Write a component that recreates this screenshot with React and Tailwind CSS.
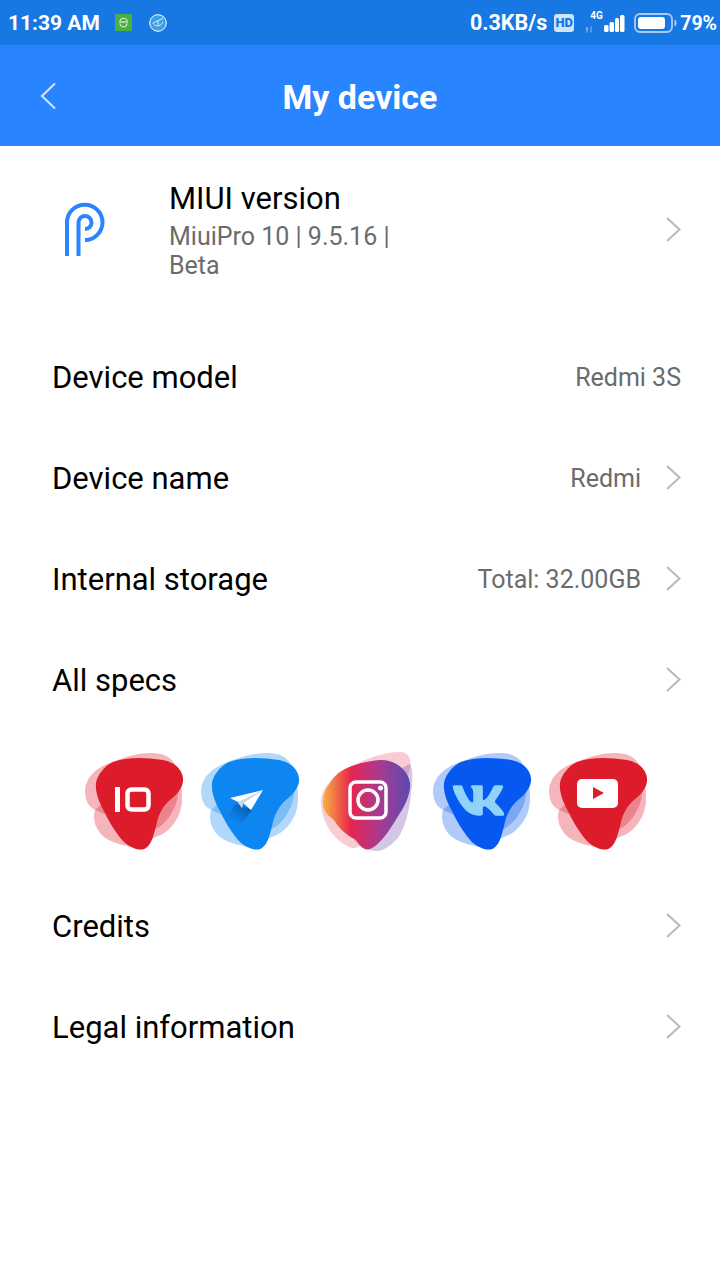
import React from "react";
import { FaVk } from "react-icons/fa";

const Chevron = ({ className = "" }) => (
  <svg width="15" height="25" viewBox="0 0 15 25" fill="none" className={className}>
    <path d="M1 1L13.500 12.500L1 24" stroke="#b8b8b8" strokeWidth="2" />
  </svg>
);

const MAIN = "M12 31C13 24 20 14 29 10C42 5 60 5 79 8C90 10 98 17 99 26C100 34 94 42 86 48C79 54 75 62 73 70C70 82 68 92 62 96C58 99 50 98 41 91C34 84 26 72 21 61C16 52 11 42 12 31Z";
const BACK_A = "M1 38C2 24 14 15 28 10C44 4 54 1 68 1C80 1 90 6 92 16C96 30 96 48 88 60C84 68 78 74 70 78C50 70 20 64 8 56C3 52 1 46 1 38Z";
const BACK_B = "M11 58C8 68 12 78 20 85C30 92 42 94 56 96C66 90 68 86 72 85C82 82 92 72 96 60C100 48 98 30 92 14C70 30 30 40 11 58Z";

const IG_MAIN = "M3 51C3 42 6 36 10 31C14 24 20 19 27 16C38 11 50 9 60 8C72 7 88 16 90 31C91 40 86 52 80 61C72 74 62 92 50 97C44 99 40 94 36 88C28 84 19 77 14 68C7 63 3 58 3 51Z";
const IG_BACK_A = "M1 50C1 36 14 22 32 14C46 7 62 0 80 0C88 0 92 6 90 16C80 60 46 98 32 96C16 90 2 74 1 50Z";
const IG_BACK_B = "M34 88C40 50 70 20 90 12C93 16 93 30 91 41C90 58 84 78 78 86C70 94 64 99 57 99C48 99 40 95 34 88Z";

const Blob = ({ main, back, back2, children, defs, paths, className = "" }) => (
  <svg width="100" height="100" viewBox="0 0 100 100" className={className}>
    {defs}
    <path d={paths ? paths[1] : BACK_A} fill={back} opacity="0.32" />
    <path d={paths ? paths[2] : BACK_B} fill={back2 || back} opacity="0.32" />
    <path d={paths ? paths[0] : MAIN} fill={main} />
    {children}
  </svg>
);

const Row = ({ label, value, chevron = true }) => (
  <div className="flex h-[101px] items-center pl-[52px] pr-[39px]">
    <span className="translate-y-[1px] text-[31px] text-black">{label}</span>
    <span className="ml-auto text-[25px] text-[#6b6b6b]">{value}</span>
    {chevron && <Chevron className="ml-[25px] -translate-y-[1px]" />}
  </div>
);

export default function App() {
  return (
    <div className="flex h-[1280px] w-[720px] flex-col bg-white font-['Roboto',sans-serif]">
      <div className="flex h-[45px] items-center bg-[#1777e3] pl-[8px] pr-[3px] pt-[2px] text-white">
        <span className="text-[21px] font-bold">11:39 AM</span>
        <svg width="17" height="17" viewBox="0 0 17 17" className="ml-[15px] -translate-y-[1px]">
          <rect width="17" height="17" fill="#4caf3f" />
          <path d="M5 7C5 3.500 12 3.500 12 7M4 8H13M5 9.500C5 14 12 14 12 9.500" stroke="#fff" strokeWidth="1" fill="none" />
        </svg>
        <svg width="18" height="18" viewBox="0 0 18 18" className="ml-[17px] -translate-y-[1px]">
          <circle cx="9" cy="9" r="8.300" fill="#3aa0e8" stroke="#fff" strokeWidth="1" />
          <path d="M3.500 9.500L9 6.500L14 4.500M5 10.500C8 13 12 12 14 8M9 6.500V11" stroke="#d8f0ff" strokeWidth="1" fill="none" />
        </svg>
        <span className="ml-auto text-[21.500px] font-bold">0.3KB/s</span>
        <span className="ml-[7px] flex h-[18px] w-[20px] -translate-y-[1px] items-center justify-center rounded-[3px] bg-[#cfe3fb] text-[13px] font-black leading-none text-[#1777e3]">HD</span>
        <div className="relative ml-[9px] h-[26px] w-[44px] -translate-y-[2px]">
          <span className="absolute left-[7px] top-[2px] text-[10px] font-bold leading-none">4G</span>
          <svg width="44" height="26" viewBox="0 0 44 26" className="absolute left-0 top-0">
            <path d="M4 23.500V18.500M3 20.500L4 18.500L5 20.500M8 23.500V17.500" stroke="#8fbdf2" strokeWidth="1" fill="none" />
            <rect x="21" y="16" width="4.500" height="7" rx="1.500" fill="#fff" />
            <rect x="26.500" y="13" width="4.500" height="10" rx="1.500" fill="#fff" />
            <rect x="32" y="9" width="4" height="14" rx="1.500" fill="#fff" />
            <rect x="37" y="6" width="4.500" height="17" rx="1.500" fill="#fff" />
          </svg>
        </div>
        <svg width="44" height="22" viewBox="0 0 44 22" className="ml-[7px] -translate-y-[1px]">
          <rect x="1" y="2" width="37" height="18" rx="5" fill="none" stroke="#a8ccf5" strokeWidth="1.800" />
          <rect x="4" y="5" width="27" height="12" rx="3" fill="#fff" />
          <path d="M41 8C42.500 10 42.500 12 41 14Z" fill="#a8ccf5" stroke="#a8ccf5" />
        </svg>
        <span className="ml-[2px] text-[19.500px] font-bold">79%</span>
      </div>

      <div className="relative flex h-[101px] items-center justify-center bg-[#2884ff] pt-[3px]">
        <svg width="17" height="28" viewBox="0 0 17 28" className="absolute left-[40px] top-[37px]">
          <path d="M15 1.500L2 14L15 26.500" stroke="#d4e6ff" strokeWidth="2" fill="none" />
        </svg>
        <span className="text-[34px] font-bold text-white">My device</span>
      </div>

      <div className="flex h-[181px] items-start pl-[64px] pr-[39px]">
        <svg width="41" height="56" viewBox="0 0 41 56" className="mt-[56px] shrink-0">
          <path d="M3 54V20.500A17.750 17.750 0 0 1 38.500 20.500A17.750 17.750 0 0 1 21 38" stroke="#2884ff" strokeWidth="4" fill="none" />
          <path d="M14.500 54V20.500A6.500 6.500 0 0 1 27.500 20.500A6.500 6.500 0 0 1 21 27" stroke="#2884ff" strokeWidth="4" fill="none" />
        </svg>
        <div className="ml-[64px] mt-[34px] w-[240px]">
          <div className="text-[31px] leading-[38px] text-black">MIUI version</div>
          <div className="mt-[4px] text-[25px] leading-[29px] text-[#6b6b6b]">MiuiPro 10 | 9.5.16 | Beta</div>
        </div>
        <Chevron className="ml-auto mt-[71px]" />
      </div>

      <Row label="Device model" value="Redmi 3S" chevron={false} />
      <Row label="Device name" value="Redmi" />
      <Row label="Internal storage" value="Total: 32.00GB" />
      <Row label="All specs" value="" />

      <div className="flex h-[145px] items-start pl-[84px] pt-[21px]">
        <Blob main="#dc1c2b" back="#dc1c2b">
          <rect x="31" y="35" width="5" height="25" fill="#fff" />
          <rect x="43.500" y="37.500" width="21" height="20" rx="4" fill="none" stroke="#fff" strokeWidth="4.500" />
        </Blob>
        <Blob main="#0d86f2" back="#0d86f2" className="ml-[16px]" defs={
          <defs>
            <linearGradient id="pl" x1="1" x2="0" y1="0" y2="1">
              <stop offset="0" stopColor="#0a3f80" stopOpacity="0.9" />
              <stop offset="1" stopColor="#0d86f2" stopOpacity="0" />
            </linearGradient>
          </defs>
        }>
          <path d="M36 52L52 58L42 72L24 68Z" fill="url(#pl)" />
          <path d="M30 46L63 38L43 51L42 56L38 50Z" fill="#fff" />
          <path d="M63 38L51 58L43 51Z" fill="#fff" />
          <path d="M38 50L42 56L43 51L63 38Z" fill="#c9d6e6" />
        </Blob>
        <Blob main="url(#ig)" back="#e86078" back2="#7a50a8" paths={[IG_MAIN, IG_BACK_A, IG_BACK_B]} className="ml-[20px]" defs={
          <defs>
            <linearGradient id="ig" x1="0" x2="1" y1="0" y2="0">
              <stop offset="0" stopColor="#f6b13e" />
              <stop offset="0.32" stopColor="#e8244e" />
              <stop offset="0.65" stopColor="#a83a90" />
              <stop offset="1" stopColor="#5a4ab0" />
            </linearGradient>
          </defs>
        }>
          <rect x="30" y="30" width="36" height="36" rx="6" fill="none" stroke="#fff" strokeWidth="3.500" />
          <circle cx="48" cy="48" r="10" fill="none" stroke="#fff" strokeWidth="3.500" />
          <circle cx="60.500" cy="36" r="2.500" fill="#fff" />
        </Blob>
        <Blob main="#0659f0" back="#0a5cf0" className="ml-[12px]">
          <foreignObject x="16" y="18" width="60" height="60">
            <div className="flex h-[60px] w-[60px] items-center justify-center text-[#8fd3fb]">
              <FaVk size="55" />
            </div>
          </foreignObject>
        </Blob>
        <Blob main="#dc1c2b" back="#dc1c2b" className="ml-[16px]">
          <rect x="29" y="27" width="41" height="29" rx="5" fill="#fff" />
          <path d="M45 35L56 41L45 47Z" fill="#dc1c2b" />
        </Blob>
      </div>

      <Row label="Credits" value="" />
      <Row label="Legal information" value="" />
    </div>
  );
}
